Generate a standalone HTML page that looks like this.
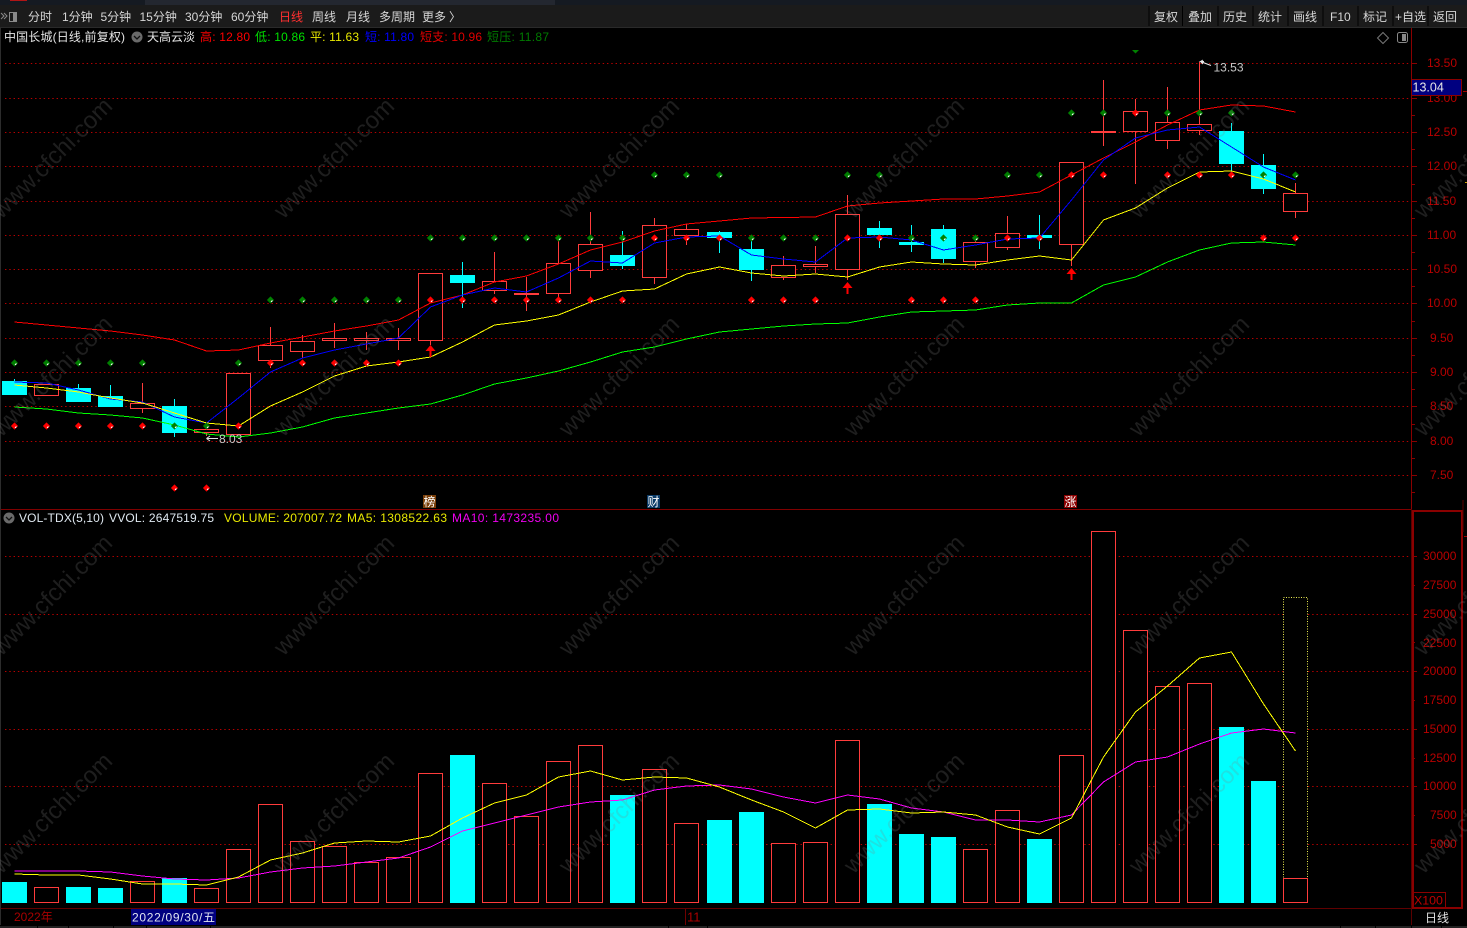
<!DOCTYPE html>
<html lang="zh"><head><meta charset="utf-8"><title>中国长城</title>
<style>
html,body{margin:0;padding:0;background:#000;width:1467px;height:928px;overflow:hidden}
svg{display:block;position:absolute;left:0;top:0}
text{font-family:"Liberation Sans","Noto Sans CJK SC",sans-serif;font-size:12px}
.nav{fill:#d6d6d6}
.ax{fill:#b80000;font-size:12.4px}
.wm text{font-size:24px;fill:rgba(130,130,130,.23);text-anchor:middle}
.dot{fill:none;stroke:#b80000;stroke-width:1;stroke-dasharray:1.4 2.9}
.h{fill:#000;stroke:#ff3c3c;stroke-width:1}
.hw{fill:none;stroke:#ff3c3c;stroke-width:1}
.c{fill:#0ff}
.cw{fill:none;stroke:#0ff;stroke-width:1}
.ln{fill:none;stroke-width:1;stroke-linejoin:round;shape-rendering:crispEdges}
</style></head><body>
<svg width="1467" height="928" viewBox="0 0 1467 928" xmlns="http://www.w3.org/2000/svg" shape-rendering="auto">
<defs>
<g id="r"><path d="M0 -3.6L3.6 0L0 3.6L-3.6 0Z" fill="#f00"/><path d="M0.5 1.8L2 0.6" stroke="#fff" stroke-width="1.1"/></g>
<g id="g"><path d="M0 -3.6L3.6 0L0 3.6L-3.6 0Z" fill="#008000"/><path d="M0.5 1.8L2 0.6" stroke="#fff" stroke-width="1.1"/></g>
</defs>
<rect width="1467" height="928" fill="#000"/>

<!-- top strip and toolbar -->
<rect x="0" y="0" width="1467" height="5" fill="#151a22"/>
<rect x="145" y="0" width="410" height="5" fill="#232730"/>
<rect x="10" y="0" width="17" height="1" fill="#b01515"/>
<rect x="0" y="5" width="1467" height="22" fill="#1b1b1b"/>
<rect x="0" y="27" width="1467" height="1" fill="#2a2a2a"/>
<g fill="none" stroke="#8a8a8a" stroke-width="1"><path d="M1 13L4 16L1 19M4 13L7 16L4 19"/><rect x="9.5" y="12.5" width="7" height="9"/></g>
<rect x="13" y="13" width="3" height="8" fill="#8a8a8a"/>
<g class="nav">
<text x="28" y="21">分时</text><text x="62" y="21">1分钟</text><text x="100.5" y="21">5分钟</text><text x="139.5" y="21">15分钟</text><text x="185" y="21">30分钟</text><text x="231" y="21">60分钟</text>
<text x="279" y="21" fill="#ff3030">日线</text><text x="312" y="21">周线</text><text x="346" y="21">月线</text><text x="379" y="21">多周期</text><text x="422" y="21">更多</text><text x="449" y="21">〉</text>
<text x="1154" y="21">复权</text><text x="1188" y="21">叠加</text><text x="1223" y="21">历史</text><text x="1258" y="21">统计</text><text x="1293" y="21">画线</text><text x="1330" y="21">F10</text><text x="1363" y="21">标记</text><text x="1395" y="21">+自选</text><text x="1433" y="21">返回</text>
</g>
<path d="M1149 6V26M1182.5 6V26M1218 6V26M1253 6V26M1288 6V26M1323 6V26M1358 6V26M1393 6V26M1428 6V26" stroke="#000" stroke-width="1"/>

<!-- info row -->
<text x="4" y="41" fill="#e4e4e4" textLength="121">中国长城(日线,前复权)</text>
<circle cx="137" cy="37" r="5.5" fill="#6a6a6a"/><path d="M134 36L137 39L140 36" fill="none" stroke="#111" stroke-width="1.3"/>
<text x="147" y="41" fill="#e4e4e4">天高云淡</text>
<text x="200" y="41" fill="#f00" textLength="50">高: 12.80</text>
<text x="255" y="41" fill="#00e000" textLength="50">低: 10.86</text>
<text x="310" y="41" fill="#e8e800" textLength="49">平: 11.63</text>
<text x="365" y="41" fill="#0000ff" textLength="49">短: 11.80</text>
<text x="420" y="41" fill="#e00000" textLength="62">短支: 10.96</text>
<text x="487" y="41" fill="#007a00" textLength="62">短压: 11.87</text>
<path d="M1383 32.5L1388.5 38L1383 43.5L1377.5 38Z" fill="none" stroke="#777"/>
<rect x="1397.5" y="32.5" width="10" height="10" rx="2" fill="none" stroke="#888"/><rect x="1402" y="34" width="4" height="7" fill="#888"/>

<!-- frame -->
<path d="M0.5 28V925" stroke="#2c2c2c"/>
<path d="M1411.5 28V509" stroke="#8a0000"/>
<path d="M1 509.5H1412" stroke="#800000"/>
<path d="M1 908.5H1412" stroke="#600000"/>
<rect x="1412" y="510" width="2" height="398" fill="#8a0000"/>
<rect x="1412" y="510" width="51" height="2" fill="#8a0000"/>
<rect x="1461" y="510" width="2" height="399" fill="#8a0000"/>
<rect x="1412" y="907" width="51" height="2" fill="#8a0000"/>
<path d="M1411.5 509V925M1463 500V532" stroke="#5a0000"/>
<path d="M1463 91.5H1467M1464 536.5H1467" stroke="#a00000"/>
<path d="M1465 182.5H1467" stroke="#c9a000"/>

<!-- price grid -->
<path class="dot" d="M5 63.5H1411M5 98.5H1411M5 132.5H1411M5 166.5H1411M5 201.5H1411M5 235.5H1411M5 269.5H1411M5 303.5H1411M5 338.5H1411M5 372.5H1411M5 406.5H1411M5 441.5H1411M5 475.5H1411"/>
<path stroke="#8a0000" fill="none" d="M1412 63.5H1417M1412 98.5H1417M1412 132.5H1417M1412 166.5H1417M1412 201.5H1417M1412 235.5H1417M1412 269.5H1417M1412 303.5H1417M1412 338.5H1417M1412 372.5H1417M1412 406.5H1417M1412 441.5H1417M1412 475.5H1417M1412 81.5H1415M1412 115.5H1415M1412 149.5H1415M1412 184.5H1415M1412 218.5H1415M1412 252.5H1415M1412 286.5H1415M1412 321.5H1415M1412 355.5H1415M1412 389.5H1415M1412 424.5H1415M1412 458.5H1415M1412 492.5H1415"/>
<g class="ax">
<text x="1427" y="67">13.50</text><text x="1427" y="102">13.00</text><text x="1427" y="136">12.50</text><text x="1427" y="170">12.00</text><text x="1427" y="205">11.50</text><text x="1427" y="239">11.00</text><text x="1427" y="273">10.50</text><text x="1427" y="307">10.00</text><text x="1430" y="342">9.50</text><text x="1430" y="376">9.00</text><text x="1430" y="410">8.50</text><text x="1430" y="445">8.00</text><text x="1430" y="479">7.50</text>
</g>
<rect x="1411.5" y="79.5" width="50" height="16" fill="#000080" stroke="#8a0000"/>
<text x="1412.5" y="91.5" fill="#e6e6e6" style="font-size:12.5px">13.04</text>

<!-- candle wicks -->
<path class="cw" d="M14.5 379V381M78.5 384V388M110.5 385V396M174.5 399V406M174.5 433V437M462.5 262V275M462.5 283V308M622.5 231V255M622.5 266V269M719.5 231V232M719.5 238V253M751.5 240V249M751.5 270V281M879.5 221V228M879.5 235V248M911.5 225V242M911.5 245V252M943.5 225V229M943.5 259V263M1039.5 215V235M1039.5 238V249M1231.5 123V131M1231.5 164V172M1263.5 154V165M1263.5 189V194"/>
<path class="hw" d="M142.5 383V403M142.5 409V413M206.5 429V429M206.5 433V436M270.5 327V345M270.5 361V368M302.5 335V341M302.5 351V358M334.5 323V339M334.5 340V348M366.5 332V339M366.5 340V350M398.5 328V339M398.5 340V350M430.5 341V345M494.5 252V281M494.5 291V294M526.5 277V311M558.5 241V263M558.5 294V300M590.5 212V244M590.5 271V278M654.5 218V225M654.5 278V284M686.5 224V229M686.5 236V245M783.5 256V265M783.5 277V280M815.5 246V264M815.5 267V273M847.5 195V214M847.5 270V280M975.5 235V242M975.5 262V268M1007.5 216V233M1007.5 248V250M1071.5 245V266M1103.5 80V146M1135.5 99V111M1135.5 131V184M1167.5 87V122M1167.5 140V149M1199.5 62V124M1199.5 130V135M1295.5 183V193M1295.5 212V218"/>
<!-- candle bodies -->
<g class="c">
<rect x="2" y="381" width="25" height="14"/><rect x="66" y="388" width="25" height="14"/><rect x="98" y="396" width="25" height="11"/><rect x="162" y="406" width="25" height="27"/><rect x="450" y="275" width="25" height="8"/><rect x="610" y="255" width="25" height="11"/><rect x="707" y="232" width="25" height="6"/><rect x="739" y="249" width="25" height="21"/><rect x="867" y="228" width="25" height="7"/><rect x="899" y="242" width="25" height="3"/><rect x="931" y="229" width="25" height="30"/><rect x="1027" y="235" width="25" height="3"/><rect x="1219" y="131" width="25" height="33"/><rect x="1251" y="165" width="25" height="24"/>
</g>
<g class="h">
<rect x="34.5" y="384.5" width="24" height="11"/><rect x="130.5" y="403.5" width="24" height="5"/><rect x="194.5" y="429.5" width="24" height="3"/><rect x="226.5" y="373.5" width="24" height="61"/><rect x="258.5" y="345.5" width="24" height="15"/><rect x="290.5" y="341.5" width="24" height="10"/><rect x="322.5" y="338.5" width="24" height="2"/><rect x="354.5" y="338.5" width="24" height="2"/><rect x="386.5" y="338.5" width="24" height="2"/><rect x="418.5" y="273.5" width="24" height="67"/><rect x="482.5" y="281.5" width="24" height="9"/><rect x="514.5" y="293.5" width="24" height="1"/><rect x="546.5" y="263.5" width="24" height="30"/><rect x="578.5" y="244.5" width="24" height="26"/><rect x="642.5" y="225.5" width="24" height="52"/><rect x="674.5" y="229.5" width="24" height="6"/><rect x="771.5" y="265.5" width="24" height="12"/><rect x="803.5" y="264.5" width="24" height="2"/><rect x="835.5" y="214.5" width="24" height="55"/><rect x="963.5" y="242.5" width="24" height="19"/><rect x="995.5" y="233.5" width="24" height="14"/><rect x="1059.5" y="162.5" width="24" height="82"/><rect x="1091.5" y="131.5" width="24" height="1"/><rect x="1123.5" y="111.5" width="24" height="20"/><rect x="1155.5" y="122.5" width="24" height="18"/><rect x="1187.5" y="124.5" width="24" height="6"/><rect x="1283.5" y="193.5" width="24" height="18"/>
</g>

<!-- price MA lines -->
<polyline class="ln" stroke="#f00" points="14.5,322 46.5,325 78.5,328 110.5,331 142.5,335 174.5,340 206.5,351 238.5,350 270.5,343 302.5,337 334.5,331 366.5,326 398.5,320 430.5,303 462.5,295 494.5,282 526.5,276 558.5,264 590.5,250 622.5,242 654.5,231 686.5,224 719.5,221 751.5,218 783.5,217.5 815.5,217 847.5,206 879.5,203 911.5,201 943.5,199 975.5,199 1007.5,196 1039.5,192 1071.5,175 1103.5,158 1135.5,142 1167.5,125 1199.5,110 1231.5,105 1263.5,106 1295.5,112"/>
<polyline class="ln" stroke="#00f" points="14.5,382 46.5,383 78.5,390 110.5,399 142.5,402 174.5,417 206.5,423 238.5,398 270.5,372 302.5,358 334.5,350 366.5,344 398.5,338 430.5,307 462.5,295 494.5,288 526.5,292 558.5,278 590.5,261 622.5,263 654.5,243 686.5,237 719.5,236 751.5,255 783.5,259 815.5,262 847.5,238 879.5,237 911.5,240 943.5,250 975.5,245 1007.5,239 1039.5,238 1071.5,200 1103.5,160 1135.5,138 1167.5,130 1199.5,127 1231.5,147 1263.5,167 1295.5,180"/>
<polyline class="ln" stroke="#ff0" points="14.5,385 46.5,388 78.5,392 110.5,398 142.5,403 174.5,413 206.5,423 238.5,426 270.5,406 302.5,392 334.5,376 366.5,366 398.5,362 430.5,357 462.5,342 494.5,325 526.5,321 558.5,315 590.5,302 622.5,291 654.5,289 686.5,274 719.5,267 751.5,273 783.5,276 815.5,274 847.5,277 879.5,267 911.5,262 943.5,264 975.5,265 1007.5,260 1039.5,256 1071.5,260 1103.5,220 1135.5,208 1167.5,188 1199.5,172 1231.5,171 1263.5,179 1295.5,192"/>
<polyline class="ln" stroke="#0f0" points="14.5,407 46.5,409 78.5,413 110.5,415 142.5,418 174.5,425 206.5,434 238.5,437 270.5,433 302.5,427 334.5,418 366.5,413 398.5,408 430.5,404 462.5,395 494.5,384 526.5,378 558.5,371 590.5,362 622.5,352 654.5,347 686.5,339 719.5,332 751.5,329 783.5,326 815.5,324 847.5,323 879.5,317 911.5,312 943.5,311 975.5,310 1007.5,305 1039.5,303 1071.5,303 1103.5,285 1135.5,277 1167.5,262 1199.5,250 1231.5,243 1263.5,242 1295.5,245"/>

<!-- dots -->
<polygon points="1132,50 1139,50 1135.5,53.5" fill="#008000"/>
<use href="#g" x="1071.5" y="113"/><use href="#g" x="1103.5" y="113"/><use href="#r" x="1135.5" y="113"/><use href="#g" x="1167.5" y="113"/><use href="#g" x="1199.5" y="113"/><use href="#g" x="1231.5" y="113"/>
<use href="#g" x="654.5" y="175"/><use href="#g" x="686.5" y="175"/><use href="#g" x="719.5" y="175"/><use href="#g" x="847.5" y="175"/><use href="#g" x="879.5" y="175"/><use href="#g" x="1007.5" y="175"/><use href="#g" x="1039.5" y="175"/><use href="#r" x="1071.5" y="175"/><use href="#r" x="1103.5" y="175"/><use href="#r" x="1167.5" y="175"/><use href="#r" x="1199.5" y="175"/><use href="#r" x="1231.5" y="175"/><use href="#g" x="1263.5" y="175"/><use href="#g" x="1295.5" y="175"/>
<use href="#g" x="430.5" y="238"/><use href="#g" x="462.5" y="238"/><use href="#g" x="494.5" y="238"/><use href="#g" x="526.5" y="238"/><use href="#g" x="558.5" y="238"/><use href="#g" x="590.5" y="238"/><use href="#g" x="622.5" y="238"/><use href="#r" x="654.5" y="238"/><use href="#r" x="686.5" y="238"/><use href="#r" x="719.5" y="238"/><use href="#g" x="751.5" y="238"/><use href="#g" x="783.5" y="238"/><use href="#g" x="815.5" y="238"/><use href="#r" x="847.5" y="238"/><use href="#r" x="879.5" y="238"/><use href="#g" x="911.5" y="238"/><use href="#g" x="943.5" y="238"/><use href="#g" x="975.5" y="238"/><use href="#r" x="1007.5" y="238"/><use href="#r" x="1039.5" y="238"/><use href="#r" x="1263.5" y="238"/><use href="#r" x="1295.5" y="238"/>
<use href="#g" x="270.5" y="300"/><use href="#g" x="302.5" y="300"/><use href="#g" x="334.5" y="300"/><use href="#g" x="366.5" y="300"/><use href="#g" x="398.5" y="300"/><use href="#r" x="430.5" y="300"/><use href="#r" x="462.5" y="300"/><use href="#r" x="494.5" y="300"/><use href="#r" x="526.5" y="300"/><use href="#r" x="558.5" y="300"/><use href="#r" x="590.5" y="300"/><use href="#r" x="622.5" y="300"/><use href="#r" x="751.5" y="300"/><use href="#r" x="783.5" y="300"/><use href="#r" x="815.5" y="300"/><use href="#r" x="911.5" y="300"/><use href="#r" x="943.5" y="300"/><use href="#r" x="975.5" y="300"/>
<use href="#g" x="14.5" y="363"/><use href="#g" x="46.5" y="363"/><use href="#g" x="78.5" y="363"/><use href="#g" x="110.5" y="363"/><use href="#g" x="142.5" y="363"/><use href="#g" x="238.5" y="363"/><use href="#r" x="270.5" y="363"/><use href="#r" x="302.5" y="363"/><use href="#r" x="334.5" y="363"/><use href="#r" x="366.5" y="363"/><use href="#r" x="398.5" y="363"/>
<use href="#r" x="14.5" y="426"/><use href="#r" x="46.5" y="426"/><use href="#r" x="78.5" y="426"/><use href="#r" x="110.5" y="426"/><use href="#r" x="142.5" y="426"/><use href="#g" x="174.5" y="426"/><use href="#g" x="206.5" y="426"/><use href="#r" x="238.5" y="426"/>
<use href="#r" x="174.5" y="488"/><use href="#r" x="206.5" y="488"/>

<!-- arrows -->
<path fill="#f00" d="M430.5 345L435.5 351H431.5V357H429.5V351H425.5ZM847.5 282L852.5 288H848.5V294H846.5V288H842.5ZM1071.5 268L1076.5 274H1072.5V280H1070.5V274H1066.5Z"/>

<!-- hi / lo labels -->
<path d="M1204 61.5L1200.5 61.5L1203 60M1200.5 61.5L1203 64M1200.5 61.5L1211 65.5" stroke="#e8e8e8" fill="none"/>
<text x="1213.5" y="71.5" fill="#c8c8c8">13.53</text>
<path d="M206.5 438.5H218M206.5 438.5L210 436M206.5 438.5L210 441" stroke="#e0e0e0" fill="none"/>
<text x="219" y="443" fill="#c8c8c8">8.03</text>

<!-- event tags -->
<rect x="423" y="495" width="13" height="13" fill="#7a3e08"/><text x="423.5" y="506" fill="#fff">榜</text>
<rect x="647" y="495" width="13" height="13" fill="#0a3a66"/><text x="647.5" y="506" fill="#fff">财</text>
<rect x="1064" y="495" width="13" height="13" fill="#8b0000"/><text x="1064.5" y="506" fill="#fff">涨</text>

<!-- volume header -->
<circle cx="9" cy="518" r="5.5" fill="#6a6a6a"/><path d="M6 517L9 520L12 517" fill="none" stroke="#111" stroke-width="1.3"/>
<text x="19" y="522" fill="#dfe8f0" textLength="85">VOL-TDX(5,10)</text>
<text x="109" y="522" fill="#dfe8f0" textLength="105">VVOL: 2647519.75</text>
<text x="224" y="522" fill="#e8e800" textLength="118">VOLUME: 207007.72</text>
<text x="347" y="522" fill="#e8e800" textLength="100">MA5: 1308522.63</text>
<text x="452" y="522" fill="#f000f0" textLength="107">MA10: 1473235.00</text>

<!-- volume grid -->
<path class="dot" d="M5 556.5H1411M5 614.5H1411M5 671.5H1411M5 729.5H1411M5 786.5H1411M5 844.5H1411"/>
<path stroke="#8a0000" fill="none" d="M1414 556.5H1417M1414 614.5H1417M1414 671.5H1417M1414 729.5H1417M1414 786.5H1417M1414 844.5H1417M1414 585.5H1415M1414 642.5H1415M1414 700.5H1415M1414 758.5H1415M1414 815.5H1415"/>
<g class="ax">
<text x="1423" y="560">30000</text><text x="1423" y="589">27500</text><text x="1423" y="618">25000</text><text x="1423" y="647">22500</text><text x="1423" y="675">20000</text><text x="1423" y="704">17500</text><text x="1423" y="733">15000</text><text x="1423" y="762">12500</text><text x="1423" y="790">10000</text><text x="1430" y="819">7500</text><text x="1430" y="848">5000</text>
</g>
<rect x="1412.5" y="892.5" width="33" height="15" fill="none" stroke="#8a0000"/>
<text x="1414" y="904.5" fill="#c00000" style="font-size:12.4px">X100</text>

<!-- volume bars -->
<rect x="1283.5" y="597.5" width="24" height="281" fill="#000" stroke="#e8e850" stroke-dasharray="1 1.5"/>
<g class="c">
<rect x="2" y="882" width="25" height="21"/><rect x="66" y="887" width="25" height="16"/><rect x="98" y="888" width="25" height="15"/><rect x="162" y="878" width="25" height="25"/><rect x="450" y="755" width="25" height="148"/><rect x="610" y="795" width="25" height="108"/><rect x="707" y="820" width="25" height="83"/><rect x="739" y="812" width="25" height="91"/><rect x="867" y="804" width="25" height="99"/><rect x="899" y="834" width="25" height="69"/><rect x="931" y="837" width="25" height="66"/><rect x="1027" y="839" width="25" height="64"/><rect x="1219" y="727" width="25" height="176"/><rect x="1251" y="781" width="25" height="122"/>
</g>
<g class="h">
<rect x="34.5" y="887.5" width="24" height="15"/><rect x="130.5" y="881.5" width="24" height="21"/><rect x="194.5" y="888.5" width="24" height="14"/><rect x="226.5" y="849.5" width="24" height="53"/><rect x="258.5" y="804.5" width="24" height="98"/><rect x="290.5" y="841.5" width="24" height="61"/><rect x="322.5" y="846.5" width="24" height="56"/><rect x="354.5" y="862.5" width="24" height="40"/><rect x="386.5" y="857.5" width="24" height="45"/><rect x="418.5" y="773.5" width="24" height="129"/><rect x="482.5" y="783.5" width="24" height="119"/><rect x="514.5" y="816.5" width="24" height="86"/><rect x="546.5" y="761.5" width="24" height="141"/><rect x="578.5" y="745.5" width="24" height="157"/><rect x="642.5" y="769.5" width="24" height="133"/><rect x="674.5" y="823.5" width="24" height="79"/><rect x="771.5" y="843.5" width="24" height="59"/><rect x="803.5" y="842.5" width="24" height="60"/><rect x="835.5" y="740.5" width="24" height="162"/><rect x="963.5" y="849.5" width="24" height="53"/><rect x="995.5" y="810.5" width="24" height="92"/><rect x="1059.5" y="755.5" width="24" height="147"/><rect x="1091.5" y="531.5" width="24" height="371"/><rect x="1123.5" y="630.5" width="24" height="272"/><rect x="1155.5" y="686.5" width="24" height="216"/><rect x="1187.5" y="683.5" width="24" height="219"/><rect x="1283.5" y="878.5" width="24" height="24"/>
</g>
<polyline class="ln" stroke="#f0f" points="14.5,871 46.5,871 78.5,871 110.5,872 142.5,876 174.5,879 206.5,880 238.5,878 270.5,872 302.5,868 334.5,866 366.5,862 398.5,858 430.5,847 462.5,831 494.5,823 526.5,815 558.5,807 590.5,802 622.5,800 654.5,790 686.5,786 719.5,785 751.5,789 783.5,797 815.5,803 847.5,795 879.5,799 911.5,808 943.5,812 975.5,820 1007.5,820 1039.5,822 1071.5,815 1103.5,782 1135.5,762 1167.5,757 1199.5,744 1231.5,733 1263.5,729 1295.5,733"/>
<polyline class="ln" stroke="#ff0" points="14.5,874 46.5,875 78.5,875 110.5,879 142.5,884 174.5,884 206.5,885 238.5,877 270.5,860 302.5,853 334.5,843 366.5,841 398.5,842 430.5,836 462.5,818 494.5,803 526.5,795 558.5,777 590.5,771 622.5,780 654.5,777 686.5,778 719.5,787 751.5,800 783.5,812 815.5,828 847.5,810 879.5,809 911.5,813 943.5,812 975.5,815 1007.5,827 1039.5,834 1071.5,818 1103.5,757 1135.5,712 1167.5,686 1199.5,658 1231.5,652 1263.5,704 1295.5,751"/>

<!-- bottom axis -->
<text x="14" y="921" fill="#a80000">2022年</text>
<rect x="131" y="909" width="85" height="16" fill="#000080"/>
<text x="132" y="921.5" fill="#dfe3f0" textLength="83">2022/09/30/五</text>
<path d="M685.5 909V925" stroke="#700000"/>
<text x="687" y="921.5" fill="#a80000" style="font-size:13px">11</text>
<text x="1425" y="922" fill="#e0e0e0">日线</text>
<rect x="0" y="926" width="1467" height="2" fill="#222"/>
<path d="M37.5 926V928M68.5 926V928M113.5 926V928M146.5 926V928M210.5 926V928M668.5 926V928M707.5 926V928M1340.5 926V928M1375.5 926V928M1411.5 926V928M1441.5 926V928" stroke="#000"/>

<!-- watermark -->
<g class="wm" transform="translate(-3 0)">
<text x="55" y="166" transform="rotate(-45 55 158)">www.cfchi.com</text><text x="337" y="166" transform="rotate(-45 337 158)">www.cfchi.com</text><text x="622" y="166" transform="rotate(-45 622 158)">www.cfchi.com</text><text x="907" y="166" transform="rotate(-45 907 158)">www.cfchi.com</text><text x="1192" y="166" transform="rotate(-45 1192 158)">www.cfchi.com</text><text x="1477" y="166" transform="rotate(-45 1477 158)">www.cfchi.com</text>
<text x="55" y="384" transform="rotate(-45 55 376)">www.cfchi.com</text><text x="337" y="384" transform="rotate(-45 337 376)">www.cfchi.com</text><text x="622" y="384" transform="rotate(-45 622 376)">www.cfchi.com</text><text x="907" y="384" transform="rotate(-45 907 376)">www.cfchi.com</text><text x="1192" y="384" transform="rotate(-45 1192 376)">www.cfchi.com</text><text x="1477" y="384" transform="rotate(-45 1477 376)">www.cfchi.com</text>
<text x="55" y="603" transform="rotate(-45 55 595)">www.cfchi.com</text><text x="337" y="603" transform="rotate(-45 337 595)">www.cfchi.com</text><text x="622" y="603" transform="rotate(-45 622 595)">www.cfchi.com</text><text x="907" y="603" transform="rotate(-45 907 595)">www.cfchi.com</text><text x="1192" y="603" transform="rotate(-45 1192 595)">www.cfchi.com</text><text x="1477" y="603" transform="rotate(-45 1477 595)">www.cfchi.com</text>
<text x="55" y="821" transform="rotate(-45 55 813)">www.cfchi.com</text><text x="337" y="821" transform="rotate(-45 337 813)">www.cfchi.com</text><text x="622" y="821" transform="rotate(-45 622 813)">www.cfchi.com</text><text x="907" y="821" transform="rotate(-45 907 813)">www.cfchi.com</text><text x="1192" y="821" transform="rotate(-45 1192 813)">www.cfchi.com</text><text x="1477" y="821" transform="rotate(-45 1477 813)">www.cfchi.com</text>
</g>
</svg>
</body></html>
